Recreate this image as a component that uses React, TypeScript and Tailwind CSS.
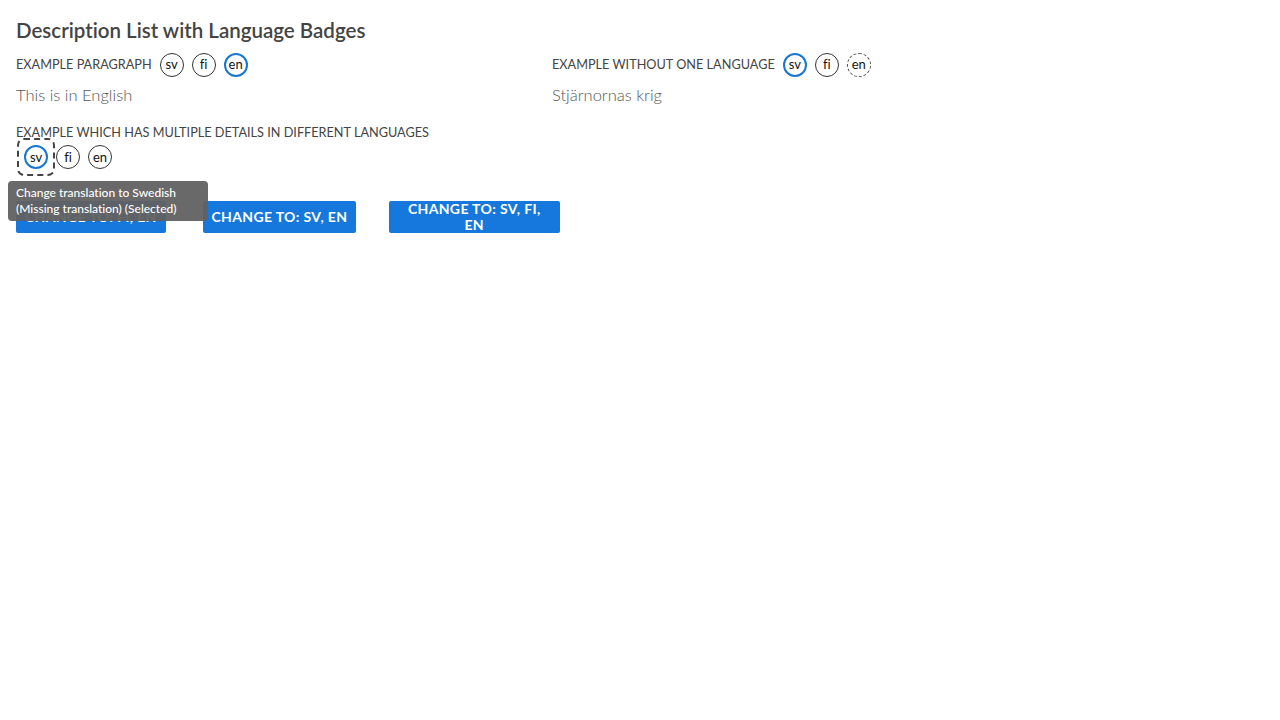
import React from 'react';

type Lang = 'sv' | 'fi' | 'en';

type BadgeState = { lang: Lang; selected?: boolean; missing?: boolean; focused?: boolean };

const font = { fontFamily: 'Lato, "Noto Sans", sans-serif' };

function Badge({ lang, selected, missing, focused }: BadgeState) {
  let ring = 'border border-[#333]';
  if (selected) ring = 'border-2 border-[#1976d2]';
  else if (missing) ring = 'border border-dashed border-[#555]';
  return (
    <button
      className={`relative flex h-8 w-8 items-center justify-center rounded-sm ${
        focused ? 'outline-2 outline-offset-1 outline-dashed outline-[#444]' : ''
      }`}
    >
      <span className={`flex h-6 w-6 items-center justify-center rounded-full text-[13px] leading-none text-[#111] ${ring}`}>
        {lang}
      </span>
      {focused && (
        <span className="absolute left-[-12px] top-10 z-10 w-[200px] rounded bg-[#616161]/95 px-2 py-1 text-left text-xs leading-4 font-medium text-white">
          Change translation to Swedish (Missing translation) (Selected)
        </span>
      )}
    </button>
  );
}

function Badges({ items }: { items: BadgeState[] }) {
  return (
    <div className="ml-1 flex">
      {items.map(b => (
        <Badge key={b.lang} {...b} />
      ))}
    </div>
  );
}

export default function App() {
  return (
    <div className="min-h-[720px] bg-white px-4 pt-4 text-[#444] [font-variant-ligatures:none]" style={font}>
      <h2 className="text-[20.5px] leading-7 font-semibold text-[#444]">Description List with Language Badges</h2>

      <dl className="mt-1 grid grid-cols-[536px_536px] gap-y-[15px]">
        <div>
          <dt className="flex h-8 items-center pt-px">
            <span className="text-[12.7px] uppercase">Example paragraph</span>
            <Badges items={[{ lang: 'sv' }, { lang: 'fi' }, { lang: 'en', selected: true }]} />
          </dt>
          <dd className="mt-[3px] text-[16.5px] leading-6 font-light text-[#555]">This is in English</dd>
        </div>
        <div>
          <dt className="flex h-8 items-center pt-px">
            <span className="text-[12.7px] uppercase">Example without one language</span>
            <Badges items={[{ lang: 'sv', selected: true }, { lang: 'fi' }, { lang: 'en', missing: true }]} />
          </dt>
          <dd className="mt-[3px] text-[16.5px] leading-6 font-light text-[#555]">Stjärnornas krig</dd>
        </div>
        <div className="col-span-2">
          <dt>
            <span className="block text-[12.7px] leading-5 uppercase">Example which has multiple details in different languages</span>
            <div className="-mt-px">
              <Badges items={[{ lang: 'sv', selected: true, focused: true }, { lang: 'fi' }, { lang: 'en' }]} />
            </div>
          </dt>
        </div>
      </dl>

      <div className="mt-7 flex gap-4">
        {['Change to: fi, en', 'Change to: sv, en', 'Change to: sv, fi, en'].map(label => (
          <div key={label} className="w-[170.5px]">
            <button className="min-h-8 max-w-full rounded-[2px] bg-[#1677dc] px-[9px] py-0 text-sm leading-4 font-bold tracking-wide text-white uppercase">
              {label}
            </button>
          </div>
        ))}
      </div>
    </div>
  );
}
